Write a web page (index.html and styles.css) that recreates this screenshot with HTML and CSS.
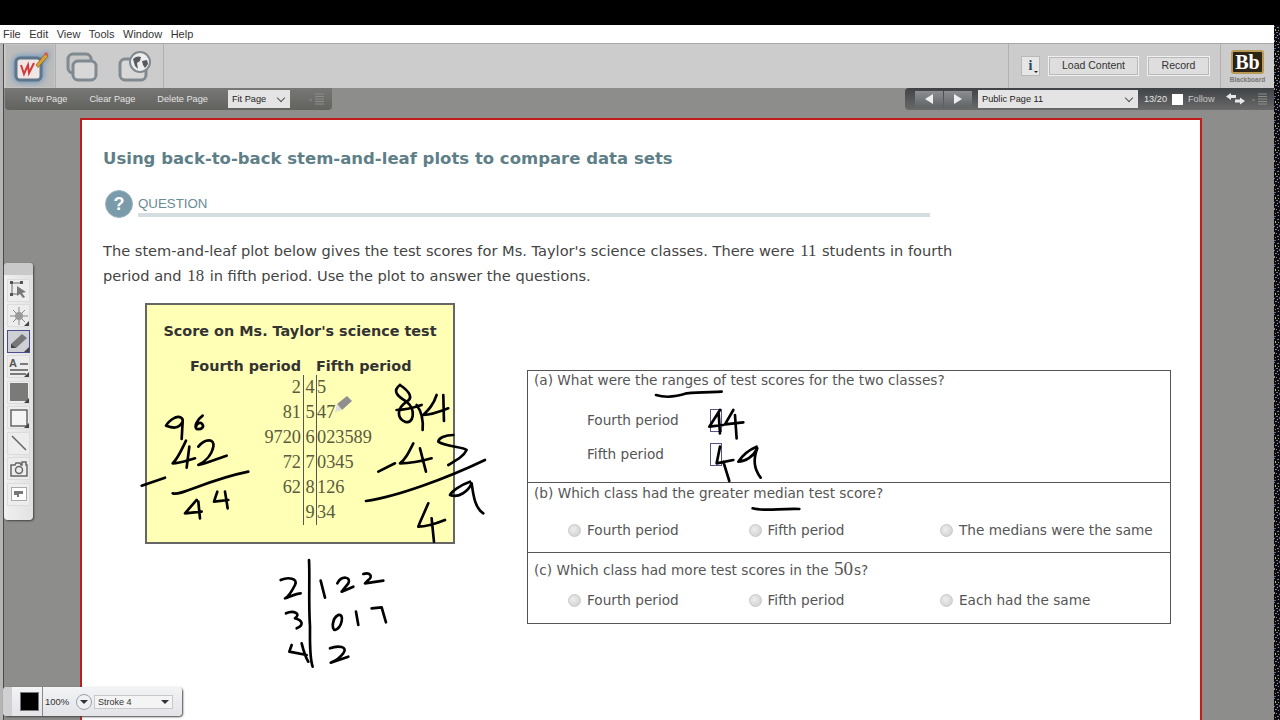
FILE: index.html
```html
<!DOCTYPE html>
<html lang="en">
<head>
    <meta charset="UTF-8">
    <title>Collaborate Session</title>
    <link rel="stylesheet" href="styles.css">
</head>
<body>
    <div class="topband"></div>

    <div class="main">
        <div class="shell">
            <div class="menubar">
                <span>File</span><span>Edit</span><span>View</span><span>Tools</span><span>Window</span><span>Help</span>
            </div>
            <div class="workspace">
                <div class="toolbar">
                    <div class="tab tab-active">
                        <svg width="38" height="34" viewBox="0 0 38 34">
                            <rect x="5" y="8" width="25" height="22" rx="4" fill="#f0e6e6" stroke="#5f7688" stroke-width="3"/>
                            <path d="M10 15l3 9 4-9 1 8 5-10" fill="none" stroke="#d23a3a" stroke-width="2"/>
                            <path d="M25 15L34 4l3 2.500-10 11z" fill="#e0a030" stroke="#7a5a20" stroke-width=".7"/>
                            <path d="M33 4l2-2 2.500 2-1 2z" fill="#d85a50"/>
                        </svg>
                    </div>
                    <div class="tab">
                        <svg class="tab-icon-left" width="32" height="30" viewBox="0 0 32 30">
                            <rect x="2" y="2" width="23" height="19" rx="5" fill="#c8c8c8" stroke="#808a90" stroke-width="3"/>
                            <rect x="7" y="9" width="23" height="19" rx="5" fill="#d8d8d8" stroke="#808a90" stroke-width="3"/>
                        </svg>
                    </div>
                    <div class="tab tab-last">
                        <svg class="tab-icon-left" width="34" height="32" viewBox="0 0 34 32">
                            <rect x="2" y="8" width="26" height="21" rx="5" fill="#d8d8d8" stroke="#808a90" stroke-width="3"/>
                            <circle cx="22" cy="11" r="10" fill="#eee" stroke="#808a90" stroke-width="2"/>
                            <path d="M15 8c3-3 6-3 8-2l-1 4-3 2 1 6-3-3zM24 10l5-1 1 4-3 4-2-3z" fill="#555b60"/>
                        </svg>
                    </div>
                    <div class="toolbar-spacer"></div>
                    <div class="toolbar-actions">
                        <button class="info-btn">i<span class="info-caret"></span></button>
                        <button class="action-btn load-btn">Load Content</button>
                        <button class="action-btn record-btn">Record</button>
                    </div>
                    <div class="brand">
                        <div class="brand-mark">Bb</div>
                        <div class="brand-name">Blackboard</div>
                    </div>
                </div>

                <div class="stage">
                    <div class="subbars">
                        <div class="subbar subbar-left">
                            <span>New Page</span><span>Clear Page</span><span>Delete Page</span>
                            <div class="select fit-select">Fit Page<i class="chevron"></i></div>
                            <svg class="list-icon" width="16" height="12" viewBox="0 0 16 12">
                                <path d="M0 7h3M6 1h9M6 3.500h9M6 6h9M6 8.500h9M6 11h9" stroke="#8d8d8a" fill="none"/>
                            </svg>
                        </div>
                        <div class="subbar subbar-right">
                            <div class="pager">
                                <button class="pager-btn"><i class="arrow-left"></i></button>
                                <button class="pager-btn"><i class="arrow-right"></i></button>
                            </div>
                            <div class="select page-select">Public Page 11<i class="chevron"></i></div>
                            <span class="page-count">13/20</span>
                            <i class="follow-box"></i>
                            <span class="follow">Follow</span>
                            <svg class="swap-icon" width="20" height="12" viewBox="0 0 20 12">
                                <path d="M0 3.500L5 0v2h5v3H5v2zM19 8l-5-3.500v2H9v3h5v2z" fill="#e8e8e8"/>
                            </svg>
                            <svg class="list-icon" width="16" height="12" viewBox="0 0 16 12">
                                <path d="M0 7h3M6 1h9M6 3.500h9M6 6h9M6 8.500h9M6 11h9" stroke="#8d8d8a" fill="none"/>
                            </svg>
                        </div>
                    </div>

                    <div class="page">
                        <h1 class="title">Using back-to-back stem-and-leaf plots to compare data sets</h1>
                        <div class="section-head">
                            <div class="q-badge">?</div>
                            <div class="q-label">QUESTION</div>
                        </div>
                        <p class="intro">The stem-and-leaf plot below gives the test scores for Ms. Taylor's science classes. There were <span class="num">11</span> students in fourth<br>period and <span class="num">18</span> in fifth period. Use the plot to answer the questions.</p>

                        <div class="content">
                            <div class="plot">
                                <div class="plot-title">Score on Ms. Taylor's science test</div>
                                <div class="plot-grid">
                                    <div class="plot-head plot-head-left">Fourth period</div>
                                    <div></div>
                                    <div class="plot-head">Fifth period</div>

                                    <div class="left">2</div><div class="stem">4</div><div class="leaf">5</div>
                                    <div class="left">81</div><div class="stem">5</div><div class="leaf">47</div>
                                    <div class="left">9720</div><div class="stem">6</div><div class="leaf">023589</div>
                                    <div class="left">72</div><div class="stem">7</div><div class="leaf">0345</div>
                                    <div class="left">62</div><div class="stem">8</div><div class="leaf">126</div>
                                    <div class="left"></div><div class="stem">9</div><div class="leaf">34</div>
                                </div>
                            </div>

                            <div class="answers">
                                <div class="answer-row row-a">
                                    <div class="ask">(a) What were the ranges of test scores for the two classes?</div>
                                    <div class="field"><label>Fourth period</label><span class="input"></span></div>
                                    <div class="field"><label>Fifth period</label><span class="input"></span></div>
                                </div>
                                <div class="answer-row row-b">
                                    <div class="ask">(b) Which class had the greater median test score?</div>
                                    <div class="choices">
                                        <div class="choice"><i class="radio"></i>Fourth period</div>
                                        <div class="choice"><i class="radio"></i>Fifth period</div>
                                        <div class="choice"><i class="radio"></i>The medians were the same</div>
                                    </div>
                                </div>
                                <div class="answer-row row-c">
                                    <div class="ask">(c) Which class had more test scores in the <span class="num num-big">50</span>s?</div>
                                    <div class="choices">
                                        <div class="choice"><i class="radio"></i>Fourth period</div>
                                        <div class="choice"><i class="radio"></i>Fifth period</div>
                                        <div class="choice"><i class="radio"></i>Each had the same</div>
                                    </div>
                                </div>
                            </div>
                        </div>
                    </div>
                </div>
            </div>
        </div>
        <!-- Garbled capture edge at the right of the video -->
        <svg class="noise" width="6" height="695">
            <defs>
                <pattern id="static" width="6" height="24" patternUnits="userSpaceOnUse">
                    <rect width="6" height="24" fill="#0c0c10"/>
                    <rect x="0" y="1" width="1" height="1" fill="#8a6fa8"/>
                    <rect x="3" y="2" width="2" height="1" fill="#5f9a88"/>
                    <rect x="1" y="4" width="1" height="2" fill="#b0b0b0"/>
                    <rect x="4" y="5" width="1" height="1" fill="#a8a04a"/>
                    <rect x="2" y="7" width="2" height="1" fill="#6a7fb8"/>
                    <rect x="5" y="8" width="1" height="2" fill="#9a5f7a"/>
                    <rect x="0" y="9" width="1" height="1" fill="#5fa05f"/>
                    <rect x="3" y="10" width="1" height="1" fill="#c0c0c0"/>
                    <rect x="1" y="12" width="2" height="1" fill="#a06fb0"/>
                    <rect x="4" y="13" width="1" height="1" fill="#60a0a8"/>
                    <rect x="0" y="15" width="1" height="2" fill="#909090"/>
                    <rect x="2" y="16" width="1" height="1" fill="#b09a50"/>
                    <rect x="5" y="17" width="1" height="1" fill="#7080c0"/>
                    <rect x="3" y="19" width="2" height="1" fill="#b06a8a"/>
                    <rect x="1" y="20" width="1" height="1" fill="#60a870"/>
                    <rect x="4" y="22" width="1" height="1" fill="#a8a8a8"/>
                    <rect x="0" y="23" width="2" height="1" fill="#5a70a0"/>
                </pattern>
            </defs>
            <rect width="6" height="695" fill="url(#static)"/>
        </svg>
    </div>

    <!-- Drawing tools palette -->
    <div class="tools">
        <div class="grip"></div>
        <div class="tool"><svg width="18" height="18" viewBox="0 0 18 18"><path d="M2 2h9M2 2v11M2 13h5" stroke="#666" fill="none"/><rect x="0" y="0" width="3" height="3" fill="#555"/><rect x="10" y="0" width="3" height="3" fill="#555"/><rect x="0" y="12" width="3" height="3" fill="#555"/><path d="M7 5l9 6-4 1 3 4-2 1-3-4-3 2z" fill="#777"/></svg></div>
        <div class="tool has-corner"><svg width="18" height="18" viewBox="0 0 18 18"><path d="M9 0v18M0 9h18M3 3l12 12M15 3L3 15" stroke="#888"/><circle cx="9" cy="9" r="4" fill="#999"/></svg></div>
        <div class="tool tool-on has-corner"><svg width="20" height="18" viewBox="0 0 20 18"><path d="M2 12L13 2l5 4L7 16H2z" fill="#777"/><path d="M2 12l5 4H2z" fill="#444"/></svg></div>
        <div class="tool has-corner"><svg width="20" height="20" viewBox="0 0 20 20"><text x="0" y="10" class="tool-a">A</text><path d="M11 7h8M1 13h18M1 17h16" stroke="#555" stroke-width="1.500" fill="none"/></svg></div>
        <div class="tool has-corner"><svg width="18" height="18" viewBox="0 0 18 18"><rect width="18" height="18" fill="#7a7a78"/></svg></div>
        <div class="tool has-corner"><svg width="18" height="18" viewBox="0 0 18 18"><rect x="1" y="1" width="16" height="16" fill="#f4f4f4" stroke="#666" stroke-width="1.500"/></svg></div>
        <div class="tool"><svg width="18" height="18" viewBox="0 0 18 18"><path d="M2 2l14 14" stroke="#666" stroke-width="1.500"/></svg></div>
        <div class="tool"><svg width="18" height="16" viewBox="0 0 18 16"><path d="M1 4h4l1-2h4l1 2h1V1h4v3h1v11H1z" fill="none" stroke="#666" stroke-width="1.500"/><circle cx="9" cy="9" r="3.500" fill="none" stroke="#666" stroke-width="1.500"/></svg></div>
        <div class="tool"><svg width="16" height="14" viewBox="0 0 16 14"><rect x=".5" y=".5" width="15" height="13" fill="#fff" stroke="#aaa"/><path d="M3 4h9v3H8v3H6V8H3z" fill="#777"/></svg></div>
    </div>

    <!-- Stroke options palette -->
    <div class="stroke-bar">
        <div class="grip-v"></div>
        <div class="swatch"></div>
        <span class="opacity">100%</span>
        <div class="round-btn"><i class="caret-down"></i></div>
        <div class="stroke-select">Stroke 4<i class="caret-down"></i></div>
    </div>

    <!-- Whiteboard ink, drawn over the page -->
    <svg class="ink" width="1280" height="720" viewBox="0 0 1280 720">
        <g transform="translate(130 295) scale(.3333)">
            <path d="M135 368C120 375 112 385 108 392C125 398 145 405 158 380C160 370 150 362 135 368M158 380L155 432"/>
            <path d="M218 362C200 375 192 395 200 402C215 405 225 395 215 385C208 380 200 388 198 395"/>
            <path d="M168 437C155 465 140 495 128 505C150 505 175 495 195 490M178 455C175 480 172 500 170 518"/>
            <path d="M205 455C225 430 255 430 250 455C245 480 225 500 205 510C230 505 265 490 290 482"/>
            <path d="M35 572L105 548"/>
            <path d="M128 595C150 605 230 555 355 530"/>
            <path d="M200 615L165 655L215 650M205 620L210 670"/>
            <path d="M262 590L252 620L295 615M285 590L293 640"/>
            <path d="M810 270C790 285 795 300 830 320C860 345 850 390 825 380C800 370 800 340 830 320C850 310 840 290 810 270"/>
            <path d="M800 345C830 345 860 335 875 330M860 330C875 350 880 380 878 405"/>
            <path d="M920 300C910 330 895 345 880 360C905 360 930 350 955 340M940 300L942 378"/>
            <path d="M745 530L795 505"/>
            <path d="M850 445C835 475 825 495 810 505C835 505 870 500 905 490M870 460L888 530"/>
            <path d="M970 420C945 420 925 430 925 440C945 455 1000 455 1010 465C1000 485 980 495 955 510"/>
            <path d="M708 618C800 605 950 550 1065 495"/>
            <path d="M1020 560C990 570 965 590 960 600C985 610 1015 590 1025 565C1030 600 1035 640 1060 655"/>
            <path d="M895 625C880 660 870 680 865 695C885 695 920 685 945 675M905 670L912 740"/>
        </g>
        <g transform="translate(520 365) scale(.3333)">
            <path d="M408 90C440 100 470 95 500 85C540 80 580 82 605 80"/>
            <path d="M698 430C730 440 780 430 838 432"/>
            <path d="M600 135L568 185L610 180M596 145L600 205"/>
            <path d="M640 135L615 178L670 172M645 150L650 220"/>
            <path d="M600 245L590 295L640 285M610 290L628 348"/>
            <path d="M710 245C685 255 665 275 655 290C675 290 700 275 712 250C700 280 700 310 722 338"/>
        </g>
        <g transform="translate(260 550) scale(.3333)">
            <path d="M147 30C150 80 145 150 150 230C150 270 148 320 158 350"/>
            <path d="M62 90C85 80 115 85 105 105C95 125 85 140 75 145C90 140 110 130 122 130"/>
            <path d="M78 190C100 180 125 190 105 205C125 210 135 225 110 235"/>
            <path d="M95 285L88 305L140 315M125 280C130 300 135 320 145 335"/>
            <path d="M182 92L195 143"/>
            <path d="M232 100C245 75 275 80 265 100L245 125L280 110"/>
            <path d="M310 72C330 65 340 80 325 90L315 100L370 92"/>
            <path d="M235 195C215 205 215 240 225 240C245 235 255 190 235 195"/>
            <path d="M288 185L295 225"/>
            <path d="M335 175L365 172L378 217"/>
            <path d="M210 295C235 285 265 290 250 310C235 330 220 335 212 338L265 320"/>
        </g>
    </svg>

    <!-- Pencil cursor -->
    <svg class="cursor" width="20" height="18" viewBox="0 0 20 18">
        <path d="M4 9L14 1l5 5-10 9z" fill="#8f8f8f"/>
        <path d="M4 9l5 6-7 2z" fill="#dcdcdc"/>
    </svg>
</body>
</html>
```

FILE: styles.css
```css
* {
    box-sizing: border-box;
}
body {
    margin: 0;
    width: 1280px;
    height: 720px;
    overflow: hidden;
    position: relative;
    display: flex;
    flex-direction: column;
    background: #b5b5b5;
    font-family: "DejaVu Sans", sans-serif;
    color: #444;
}
.topband {
    height: 25px;
    background: #000;
    flex: none;
}
.main {
    flex: 1;
    display: flex;
    min-height: 0;
}
.shell {
    flex: 1;
    display: flex;
    flex-direction: column;
    min-width: 0;
}
.menubar {
    height: 19px;
    flex: none;
    background: #fff;
    border-bottom: 1px solid #a8a8a8;
    display: flex;
    align-items: center;
    gap: 8.500px;
    padding-left: 3px;
    font-family: "Liberation Sans", sans-serif;
    font-size: 11px;
    color: #333;
}
.workspace {
    flex: 1;
    margin-left: 3px;
    border-left: 1px solid #4a4a4a;
    display: flex;
    flex-direction: column;
    min-height: 0;
}
.noise {
    flex: none;
}

/* top toolbar */
.toolbar {
    height: 44px;
    flex: none;
    background: #cccccc;
    display: flex;
}
.tab {
    width: 54px;
    display: flex;
    align-items: center;
    justify-content: center;
    padding-top: 1px;
}
.tab-icon-left {
    margin-left: -3px;
}
.tab-active {
    width: 51px;
    margin-left: 1px;
    background: #bcbcbc;
    border-right: 1px solid #b0b0b0;
    box-shadow: inset 0 0 0 1px #c4c4c4;
}
.tab-active svg {
    filter: drop-shadow(0 0 3px #4d88c4);
}
.tab-last {
    border-right: 1px solid #b0b0b0;
}
.toolbar-spacer {
    flex: 1;
}
.toolbar-actions {
    width: 213px;
    border-left: 1px solid #b0b0b0;
    border-right: 1px solid #b0b0b0;
    display: flex;
    align-items: flex-start;
    padding: 12px 0 0 12px;
    gap: 8px;
}
.info-btn {
    width: 19px;
    height: 20px;
    padding: 0;
    border: 1px solid #b9b9b9;
    background: #e6e6e6;
    font: bold 14px "Liberation Serif", serif;
    color: #24465f;
    position: relative;
}
.info-caret {
    position: absolute;
    right: 1px;
    bottom: 2px;
    border: 2.500px solid transparent;
    border-top-color: #222;
    border-bottom: 0;
}
.action-btn {
    height: 20px;
    padding: 0 0 2px;
    border: 1px solid #f0f0f0;
    outline: 1px solid #b9b9b9;
    outline-offset: -2px;
    background: #dedede;
    font-family: "Liberation Sans", sans-serif;
    font-size: 10.500px;
    color: #333;
}
.load-btn {
    width: 91px;
}
.record-btn {
    width: 63px;
}
.brand {
    width: 53px;
    display: flex;
    flex-direction: column;
    align-items: center;
    padding-top: 6px;
}
.brand-mark {
    width: 33px;
    height: 24px;
    border-radius: 3px;
    background: #2c2416;
    border: 2px solid #b89a55;
    color: #fff;
    font: bold 20px/20px "Liberation Serif", serif;
    text-align: center;
}
.brand-name {
    margin-top: 2px;
    font-family: "Liberation Sans", sans-serif;
    font-size: 6.500px;
    font-weight: bold;
    color: #777;
}

/* page bars */
.stage {
    flex: 1;
    background: #8d8d8b;
    min-height: 0;
    display: flex;
    flex-direction: column;
}
.subbars {
    height: 22px;
    flex: none;
    display: flex;
    justify-content: space-between;
}
.subbar {
    display: flex;
    align-items: center;
    font-family: "Liberation Sans", sans-serif;
    font-size: 9.200px;
    color: #e4e4e4;
}
.subbar-left {
    width: 327px;
    margin-left: 1px;
    padding-left: 20px;
    background: linear-gradient(#777775, #62625f);
    border-radius: 0 0 4px 4px;
}
.subbar-left span {
    margin-right: 22px;
}
.select {
    height: 18px;
    background: #e4e4e4;
    color: #222;
    display: flex;
    align-items: center;
    justify-content: space-between;
    padding: 0 6px 0 4px;
    font-size: 9.200px;
}
.fit-select {
    width: 62px;
    margin-left: -2px;
}
.chevron {
    width: 6px;
    height: 6px;
    border-right: 1px solid #555;
    border-bottom: 1px solid #555;
    transform: rotate(45deg);
    margin-top: -3px;
}
.list-icon {
    margin-left: 19px;
}
.subbar-right {
    width: 369px;
    padding-left: 10px;
    background: linear-gradient(#3f4245, #6a6a6a);
    border-radius: 4px 0 0 4px;
}
.pager {
    display: flex;
    gap: 1px;
    margin-right: 6px;
}
.pager-btn {
    width: 28px;
    height: 16px;
    padding: 0;
    border: 0;
    background: linear-gradient(#8c8e90, #626568);
    display: flex;
    align-items: center;
    justify-content: center;
}
.arrow-left {
    border: 5px solid transparent;
    border-left: 0;
    border-right: 8px solid #eee;
}
.arrow-right {
    border: 5px solid transparent;
    border-right: 0;
    border-left: 8px solid #eee;
}
.page-select {
    width: 160px;
    margin-right: 6px;
}
.page-count {
    margin-right: 5px;
}
.follow-box {
    width: 11px;
    height: 11px;
    background: #fff;
    margin-right: 5px;
}
.follow {
    color: #c8c8c8;
}
.swap-icon {
    margin-left: 11px;
}
.subbar-right .list-icon {
    margin-left: 6px;
}

/* page */
.page {
    width: 1122px;
    height: 620px;
    margin: 8px 0 0 76px;
    flex: none;
    background: #fff;
    border: 2px solid #c01c1c;
    border-bottom: 0;
    padding: 0 0 0 21px;
}
.title {
    margin: 29px 0 0;
    font-size: 16.500px;
    line-height: 20px;
    font-weight: bold;
    color: #5f7f88;
}
.section-head {
    margin-top: 21px;
    margin-left: 2px;
    display: flex;
    height: 30px;
}
.q-badge {
    width: 28px;
    height: 28px;
    border-radius: 50%;
    background: #7a9caa;
    color: #fff;
    font: bold 18px/26px "Liberation Sans", sans-serif;
    text-align: center;
    border: 1px solid #9ab4bf;
}
.q-label {
    width: 792px;
    margin-left: 5px;
    height: 27px;
    border-bottom: 4px solid #d3dde2;
    padding-top: 6px;
    font-family: "Liberation Sans", sans-serif;
    font-size: 13.300px;
    line-height: 15px;
    color: #6a8a95;
}
.intro {
    margin: 18px 0 0;
    font-size: 14.600px;
    line-height: 25px;
    color: #444;
}
.num {
    font-family: "Liberation Serif", serif;
    font-size: 1.150em;
    line-height: 1;
    margin: 0 1px;
}
.num-big {
    font-size: 1.400em;
}
.content {
    display: flex;
    align-items: flex-start;
    margin-top: 15px;
}

/* stem-and-leaf box */
.plot {
    width: 310px;
    height: 241px;
    margin-left: 42px;
    background: #ffffb5;
    border: 2px solid #666;
}
.plot-title {
    margin-top: 17px;
    text-align: center;
    font-size: 14.400px;
    line-height: 18px;
    font-weight: bold;
    color: #333;
}
.plot-grid {
    display: grid;
    grid-template-columns: 156px 13px 1fr;
    grid-auto-rows: 25px;
    margin-top: 10px;
}
.plot-head {
    font-size: 14.400px;
    font-weight: bold;
    line-height: 32px;
    height: 25px;
    white-space: nowrap;
    color: #333;
}
.plot-head-left {
    text-align: right;
    padding-right: 2px;
}
.left,
.stem,
.leaf {
    font-family: "Liberation Serif", serif;
    font-size: 18.300px;
    line-height: 25px;
    color: #5a5a40;
}
.left {
    text-align: right;
    padding-right: 2px;
}
.stem {
    text-align: center;
    border-left: 1px solid #555;
    border-right: 1px solid #555;
    width: 14px;
}
.leaf {
    padding-left: 1px;
}

/* questions table */
.answers {
    width: 644px;
    margin: 67px 0 0 72px;
    border: 1px solid #555;
    font-size: 13.650px;
    color: #555;
}
.answer-row {
    padding-left: 6px;
}
.row-a {
    height: 111px;
}
.row-b {
    height: 70px;
    border-top: 1px solid #555;
}
.row-c {
    height: 71px;
    border-top: 1px solid #555;
}
.ask {
    line-height: 18px;
}
.row-b .ask {
    padding-top: 1px;
}
.row-c .ask {
    padding-top: 6px;
}
.field {
    display: flex;
    align-items: center;
    padding-left: 53px;
    height: 34px;
}
.row-a .ask {
    margin-bottom: 14px;
}
.field label {
    width: 123px;
}
.input {
    width: 12px;
    height: 23px;
    border: 1px solid #55558a;
    background: #fff;
}
.choices {
    display: flex;
    margin-top: 19px;
    margin-left: 34px;
}
.row-c .choices {
    margin-top: 12px;
}
.choice {
    display: flex;
    align-items: center;
    gap: 6px;
    width: 180.500px;
    line-height: 18px;
}
.choice:nth-child(2) {
    width: 191.500px;
}
.choice:nth-child(3) {
    width: auto;
}
.radio {
    width: 13px;
    height: 13px;
    border-radius: 50%;
    border: 1px solid #c8c8c8;
    background: radial-gradient(circle at 40% 40%, #eeeeee, #cccccc);
}

/* palettes on top */
.tools {
    position: absolute;
    left: 4px;
    top: 263px;
    width: 29px;
    height: 257px;
    background: linear-gradient(90deg, #f0f0f0, #e2e2e2);
    border-radius: 4px;
    box-shadow: 1px 1px 2px #444;
    display: flex;
    flex-direction: column;
    align-items: center;
    gap: 2.500px;
}
.grip {
    width: 100%;
    height: 12px;
    margin-bottom: 1px;
    background: #c9c9c9;
    border-radius: 4px 4px 0 0;
}
.tool {
    width: 23px;
    height: 23px;
    background: #ededed;
    border: 1px solid #dcdcdc;
    display: flex;
    align-items: center;
    justify-content: center;
    position: relative;
    flex: none;
}
.tool-on {
    background: #cfcfd6;
    border: 1px solid #4a4f8c;
}
.has-corner::after {
    content: "";
    position: absolute;
    right: 0;
    bottom: 0;
    border-left: 5px solid transparent;
    border-bottom: 5px solid #444;
}
.tool-a {
    font: bold 11px "Liberation Sans", sans-serif;
    fill: #555;
}
.stroke-bar {
    position: absolute;
    left: 3px;
    top: 687px;
    width: 179px;
    height: 29px;
    background: linear-gradient(#f2f3f5, #e2e4e8);
    border-radius: 4px;
    box-shadow: 1px 1px 2px #444;
    display: flex;
    align-items: center;
    font-family: "Liberation Sans", sans-serif;
    font-size: 9.500px;
    color: #333;
}
.grip-v {
    width: 9px;
    height: 100%;
    background: #d0d0d0;
    border-radius: 4px 0 0 4px;
    margin-right: 8px;
}
.swatch {
    width: 19px;
    height: 19px;
    background: #000;
    border: 1px solid #777;
}
.opacity {
    margin-left: 3px;
    padding-left: 2px;
    border-left: 1px solid #888;
    height: 100%;
    line-height: 29px;
    width: 31px;
}
.round-btn {
    width: 16px;
    height: 16px;
    margin-left: 3px;
    border-radius: 50%;
    border: 1px solid #9aa0a8;
    background: #eef0f2;
    display: flex;
    align-items: center;
    justify-content: center;
}
.caret-down {
    border: 4px solid transparent;
    border-top: 4px solid #333;
    border-bottom: 0;
}
.stroke-select {
    width: 79px;
    height: 14px;
    margin-left: 2px;
    padding: 0 3px;
    background: #f4f4f4;
    border: 1px solid #c8c8c8;
    display: flex;
    align-items: center;
    justify-content: space-between;
    font-size: 9px;
}
.ink {
    position: absolute;
    left: 0;
    top: 0;
    pointer-events: none;
}
.ink path {
    fill: none;
    stroke: #000;
    stroke-width: 8;
    stroke-linecap: round;
    stroke-linejoin: round;
}
.cursor {
    position: absolute;
    left: 333px;
    top: 395px;
}
```
